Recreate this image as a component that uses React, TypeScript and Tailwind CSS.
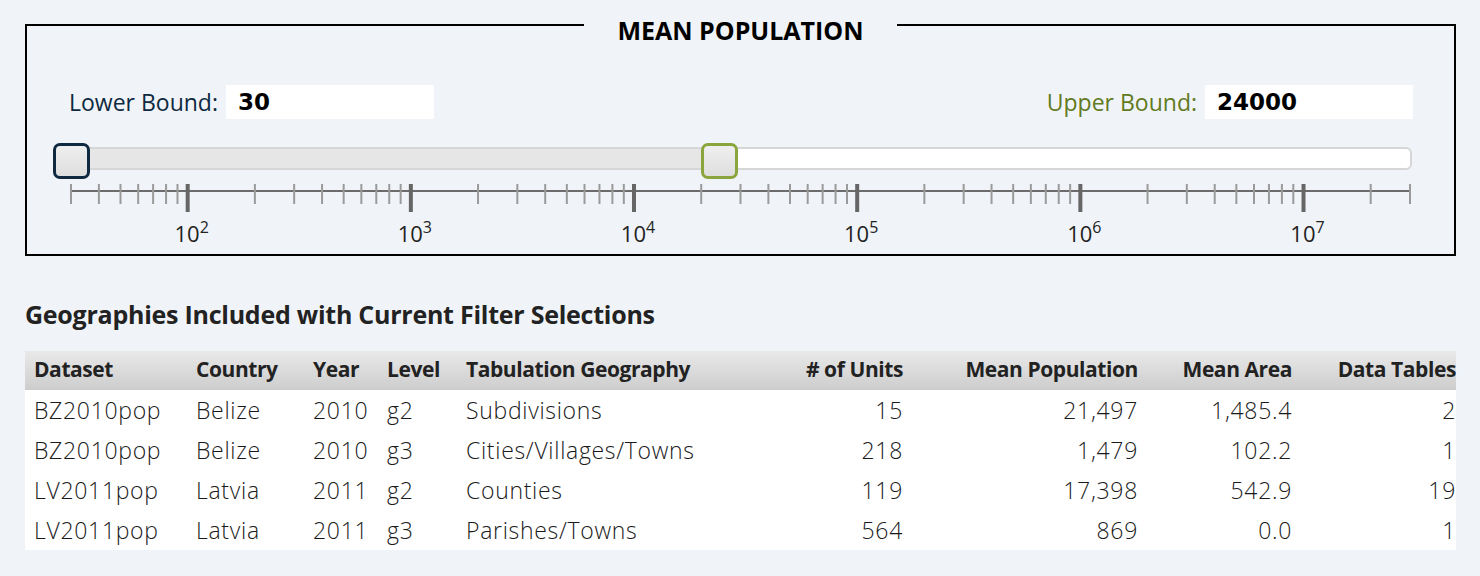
import React from "react";

const LOG_MIN = Math.log10(30);
const LOG_MAX = Math.log10(3e7);
const AXIS_LEFT = 16;
const AXIS_WIDTH = 1339;

const xFor = (v: number) => AXIS_LEFT + ((Math.log10(v) - LOG_MIN) / (LOG_MAX - LOG_MIN)) * AXIS_WIDTH;

const rows = [
  ["BZ2010pop", "Belize", "2010", "g2", "Subdivisions", "15", "21,497", "1,485.4", "2"],
  ["BZ2010pop", "Belize", "2010", "g3", "Cities/Villages/Towns", "218", "1,479", "102.2", "1"],
  ["LV2011pop", "Latvia", "2011", "g2", "Counties", "119", "17,398", "542.9", "19"],
  ["LV2011pop", "Latvia", "2011", "g3", "Parishes/Towns", "564", "869", "0.0", "1"],
];

const headers = [
  "Dataset",
  "Country",
  "Year",
  "Level",
  "Tabulation Geography",
  "# of Units",
  "Mean Population",
  "Mean Area",
  "Data Tables",
];

const colWidths = ["w-[162px]", "w-[117px]", "w-[74px]", "w-[79px]", "w-[318px]", "w-[128px]", "w-[235px]", "w-[154px]", "w-[164px]"];

function Axis() {
  const minor: number[] = [];
  const major: number[] = [];
  for (let e = 1; e <= 7; e++) {
    for (let m = 1; m <= 9; m++) {
      const v = m * Math.pow(10, e);
      if (v < 30 || v > 3e7) continue;
      if (m === 1) major.push(v);
      else minor.push(v);
    }
  }
  return (
    <svg width="1357" height="84" className="block">
      <line x1={AXIS_LEFT} x2={AXIS_LEFT + AXIS_WIDTH} y1="21" y2="21" stroke="#6b6b6b" strokeWidth="2" />
      {minor.map((v) => (
        <line key={v} x1={xFor(v)} x2={xFor(v)} y1="14" y2="34" stroke="#9a9a9a" strokeWidth="2" />
      ))}
      {major.map((v, i) => (
        <g key={v}>
          <line x1={xFor(v)} x2={xFor(v)} y1="14" y2="42" stroke="#666" strokeWidth="4" />
          <text
            x={xFor(v) + 4}
            y="72"
            textAnchor="middle"
            fontSize="22"
            fill="#222"
            fontFamily="'Open Sans', sans-serif"
          >
            10
            <tspan dy="-9" fontSize="16">
              {i + 2}
            </tspan>
          </text>
        </g>
      ))}
    </svg>
  );
}

function Slider() {
  const lowerX = xFor(30);
  const upperX = xFor(24000);
  return (
    <div className="ml-[28px] mr-[42px]">
      <div className="relative mt-[27px] h-[23px]">
        <div className="flex h-full overflow-hidden rounded-[6px] border-2 border-[#d6d6d6] bg-white">
          <div className="h-full bg-[#e6e6e6]" style={{ width: upperX }} />
        </div>
        <div
          className="absolute top-[-4px] h-[36px] w-[37px] rounded-[7px] border-[3px] border-[#0e2940] bg-gradient-to-b from-[#efefef] to-[#dedede]"
          style={{ left: lowerX - 18 }}
        />
        <div
          className="absolute top-[-4px] h-[36px] w-[37px] rounded-[7px] border-[3px] border-[#89a53b] bg-gradient-to-b from-[#efefef] to-[#dedede]"
          style={{ left: upperX - 18 }}
        />
      </div>
      <Axis />
    </div>
  );
}

function Bound({ label, value, color }: { label: string; value: string; color: string }) {
  return (
    <div className="flex items-center gap-2">
      <span className={`text-[23px] ${color}`}>{label}</span>
      <div className="flex h-[34px] w-[208px] items-center bg-white pl-3 font-['DejaVu_Sans',sans-serif] text-[23px] font-bold text-black">
        {value}
      </div>
    </div>
  );
}

export default function App() {
  return (
    <div className="min-h-[576px] bg-[#f0f4f8] px-[25px] pt-[9px] font-['Open_Sans',sans-serif] text-[#222]">
      <fieldset className="border-2 border-black">
        <legend className="mx-auto px-[33px] text-[25px] font-bold leading-[32px] text-black">
          <span className="relative top-[5px]">MEAN POPULATION</span>
        </legend>
        <div className="mt-[44px] flex items-center justify-between pl-[42px] pr-[41px]">
          <Bound label="Lower Bound:" value="30" color="text-[#0e2940]" />
          <Bound label="Upper Bound:" value="24000" color="text-[#627a22]" />
        </div>
        <Slider />
      </fieldset>

      <h2 className="mt-[38px] text-[25px] font-bold leading-[40px] tracking-[-0.01em] text-[#222]">
        Geographies Included with Current Filter Selections
      </h2>

      <table className="mt-[17px] w-[1431px] table-fixed border-collapse">
        <colgroup>
          {colWidths.map((w, i) => (
            <col key={i} className={w} />
          ))}
        </colgroup>
        <thead>
          <tr className="h-[39px] bg-gradient-to-b from-[#e9e9e9] to-[#cdcdcd]">
            {headers.map((h, i) => (
              <th
                key={h}
                className={`whitespace-nowrap text-[21px] font-bold tracking-[-0.02em] ${i < 5 ? "pl-[9px] text-left" : "text-right"}`}
              >
                {h}
              </th>
            ))}
          </tr>
        </thead>
        <tbody className="bg-white">
          {rows.map((r, ri) => (
            <tr key={ri} className="h-[40px]">
              {r.map((c, i) => (
                <td
                  key={i}
                  className={`whitespace-nowrap pt-[1px] text-[23px] font-light tracking-[0.03em] text-[#1a1a1a] ${i < 5 ? "pl-[9px] text-left" : "text-right"}`}
                >
                  {c}
                </td>
              ))}
            </tr>
          ))}
        </tbody>
      </table>
    </div>
  );
}
